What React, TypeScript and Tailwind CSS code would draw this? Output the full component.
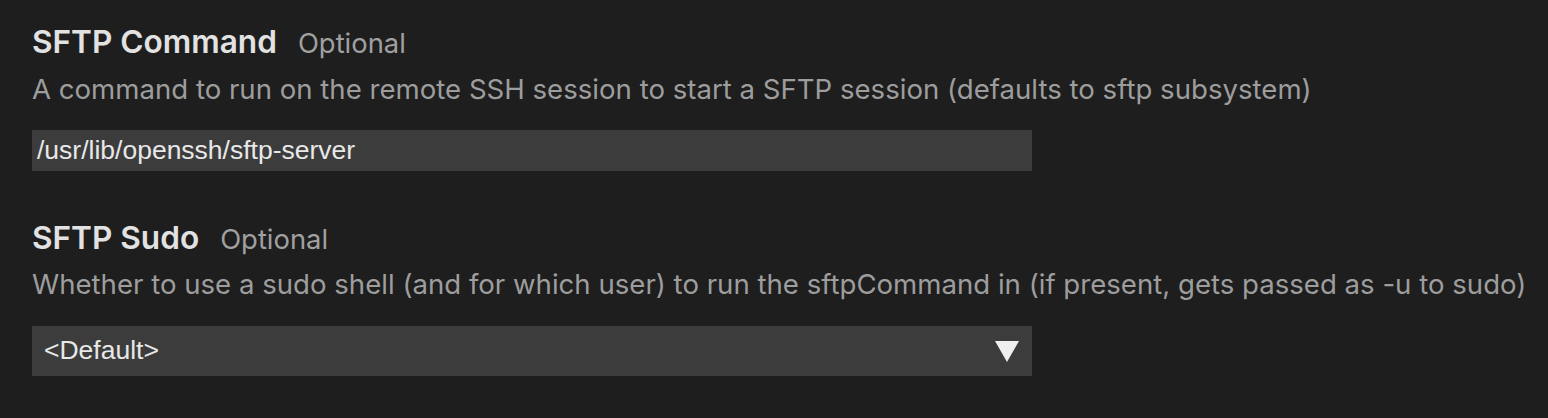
import React from 'react';

const Field: React.FC<{ title: string; desc: string; descGap: string; children: React.ReactNode }> = ({
  title,
  desc,
  descGap,
  children,
}) => (
  <div className="flex flex-col">
    <div className="flex items-baseline gap-[21px] h-[38px]">
      <span className="text-[31.6px] font-semibold text-[#e2e2e2] leading-[38px]">{title}</span>
      <span className="text-[27.4px] text-[#a0a0a0] leading-[38px]">Optional</span>
    </div>
    <p className={`${descGap} text-[27.6px] text-[#9d9d9d] leading-[34px] whitespace-nowrap`}>{desc}</p>
    {children}
  </div>
);

export default function App() {
  return (
    <div
      className="w-[1548px] h-[418px] bg-[#1e1e1e] px-[32px] pt-[23px] flex flex-col gap-[48px]"
      style={{ fontFamily: 'Inter, "Noto Sans", sans-serif' }}
    >
      <Field
        title="SFTP Command"
        descGap="mt-[11px]"
        desc="A command to run on the remote SSH session to start a SFTP session (defaults to sftp subsystem)"
      >
        <div className="mt-[24px] w-[1000px] h-[41px] bg-[#3c3c3c] flex items-center px-[5px] text-[26.5px] text-[#e8e8e8] font-['Liberation_Sans',sans-serif]">
          /usr/lib/openssh/sftp-server
        </div>
      </Field>
      <Field
        title="SFTP Sudo"
        descGap="mt-[10px]"
        desc="Whether to use a sudo shell (and for which user) to run the sftpCommand in (if present, gets passed as -u to sudo)"
      >
        <div className="mt-[25px] w-[1000px] h-[50px] bg-[#3c3c3c] flex items-center justify-between pl-[12px] pr-[13px] text-[26.5px] text-[#e8e8e8] font-['Liberation_Sans',sans-serif]">
          <span>&lt;Default&gt;</span>
          <svg width="24" height="21" viewBox="0 0 24 21">
            <polygon points="0,0 24,0 12,21" fill="#efefef" />
          </svg>
        </div>
      </Field>
    </div>
  );
}
